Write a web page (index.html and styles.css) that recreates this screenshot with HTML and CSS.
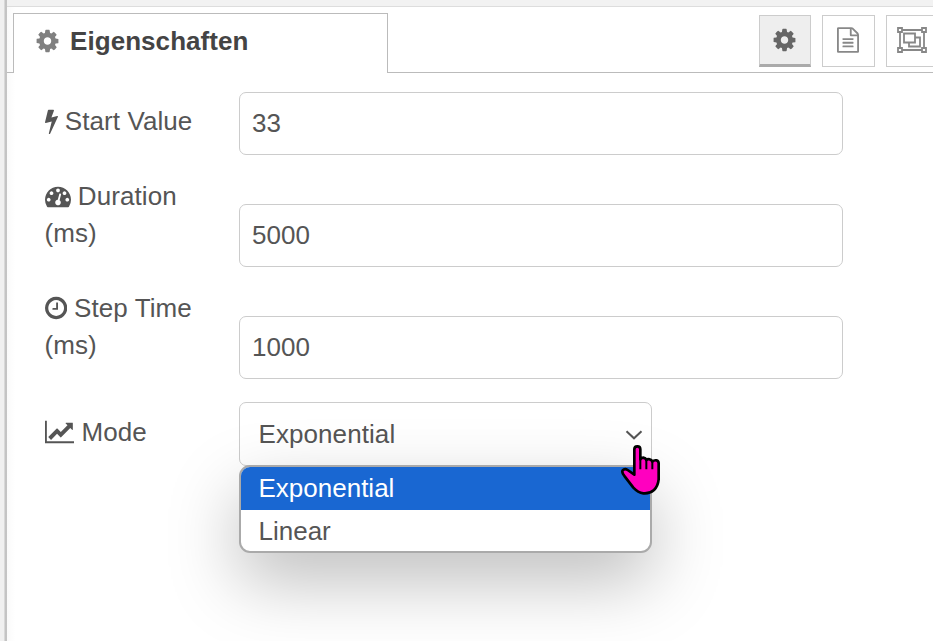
FILE: index.html
```html
<!DOCTYPE html>
<html lang="de">
<head>
<meta charset="utf-8">
<title>Eigenschaften</title>
<link rel="stylesheet" href="styles.css">
</head>
<body>
<svg class="defs" aria-hidden="true">
  <symbol id="cog" viewBox="0 0 1536 1792"><path d="M1024 896q0-106-75-181t-181-75-181 75-75 181 75 181 181 75 181-75 75-181zm512-109v222q0 12-8 23t-20 13l-185 28q-19 54-39 91 35 50 107 138 10 12 10 25t-9 23q-27 37-99 108t-94 71q-12 0-26-9l-138-108q-44 23-91 38-16 136-29 186-7 28-36 28h-222q-14 0-24.500-8.500t-11.500-21.500l-28-184q-49-16-90-37l-141 107q-10 9-25 9-14 0-25-11-126-114-165-168-7-10-7-23 0-12 8-23 15-21 51-66.500t54-70.500q-27-50-41-99l-183-27q-13-2-21-12.500t-8-23.500v-222q0-12 8-23t19-13l186-28q14-46 39-92-40-57-107-138-10-12-10-24 0-10 9-23 26-36 98.500-107.500t94.500-71.500q13 0 26 10l138 107q44-23 91-38 16-136 29-186 7-28 36-28h222q14 0 24.500 8.500t11.500 21.500l28 184q49 16 90 37l142-107q9-9 24-9 13 0 25 10 129 119 165 170 7 8 7 22 0 12-8 23-15 21-51 66.500t-54 70.500q26 50 41 98l183 28q13 2 21 12.500t8 23.500z"/></symbol>
</svg>
<div class="app">
  <div class="gutter"></div>
  <main class="panel">
    <div class="toolbar-edge"></div>
    <header class="tabs">
      <div class="tab-lead"></div>
      <div class="tab">
        <svg class="tab-icon" viewBox="0 0 1536 1792"><use href="#cog"/></svg>
        <span>Eigenschaften</span>
      </div>
      <div class="tools">
        <button class="tool active"><svg class="i-cog" viewBox="0 0 1536 1792"><use href="#cog"/></svg></button>
        <button class="tool"><svg class="i-file" viewBox="0 0 1536 1792"><path d="M1468 380q28 28 48 76t20 88v1152q0 40-28 68t-68 28h-1344q-40 0-68-28t-28-68v-1600q0-40 28-68t68-28h896q40 0 88 20t76 48zm-444-244v376h376q-10-29-22-41l-313-313q-12-12-41-22zm384 1528v-1024h-416q-40 0-68-28t-28-68v-416h-768v1536h1280zm-1024-864q0-14 9-23t23-9h704q14 0 23 9t9 23v64q0 14-9 23t-23 9h-704q-14 0-23-9t-9-23v-64zm736 224q14 0 23 9t9 23v64q0 14-9 23t-23 9h-704q-14 0-23-9t-9-23v-64q0-14 9-23t23-9h704zm0 256q14 0 23 9t9 23v64q0 14-9 23t-23 9h-704q-14 0-23-9t-9-23v-64q0-14 9-23t23-9h704z"/></svg></button>
        <button class="tool"><svg class="i-group" viewBox="0 0 30 26"><path d="M5 3h20M5 23h20M3 5v16M27 5v16M1 1h4v4H1zM25 1h4v4h-4zM1 21h4v4H1zM25 21h4v4h-4zM7 6.500h11v9H7zM18 10.500h5v9H12v-4"/></svg></button>
      </div>
    </header>
    <form class="form">
      <div class="row">
        <label class="label"><svg class="fa bolt" viewBox="0 0 896 1792"><path d="M885 566q18 20 7 44l-540 1157q-13 25-42 25-4 0-14-2-17-5-25.500-19t-4.500-30l197-808-406 101q-4 1-12 1-18 0-31-11-18-15-13-39l201-825q4-14 16-23t28-9h328q19 0 32 12.500t13 29.500q0 8-5 18l-171 463 396-98q8-2 12-2 19 0 34 15z"/></svg> Start Value</label>
        <div class="field">33</div>
      </div>
      <div class="row wrapped">
        <label class="label"><svg class="fa gauge" viewBox="0 0 1792 1792"><path d="M384 1152q0-53-37.500-90.500t-90.500-37.500-90.500 37.500-37.500 90.500 37.500 90.500 90.500 37.500 90.500-37.500 37.500-90.500zm192-448q0-53-37.500-90.500t-90.500-37.500-90.500 37.500-37.500 90.500 37.500 90.500 90.500 37.500 90.500-37.500 37.500-90.500zm428 481l101-382q6-26-7.500-48.500t-38.500-29.500-48 6.500-30 39.500l-101 382q-60 5-107 43.500t-63 98.500q-20 77 20 146t117 89 146-20 89-117q16-60-6-117t-72-91zm660-33q0-53-37.500-90.500t-90.500-37.500-90.500 37.500-37.500 90.500 37.500 90.500 90.500 37.500 90.500-37.500 37.500-90.500zm-640-640q0-53-37.500-90.500t-90.500-37.500-90.500 37.500-37.500 90.500 37.500 90.500 90.500 37.500 90.500-37.500 37.500-90.500zm448 192q0-53-37.500-90.500t-90.500-37.500-90.500 37.500-37.500 90.500 37.500 90.500 90.500 37.500 90.500-37.500 37.500-90.500zm320 448q0 261-141 483-19 29-54 29h-1402q-35 0-54-29-141-221-141-483 0-182 71-348t191-286 286-191 348-71 348 71 286 191 191 286 71 348z"/></svg> Duration<br>(ms)</label>
        <div class="field">5000</div>
      </div>
      <div class="row wrapped">
        <label class="label"><svg class="fa clock" viewBox="0 0 1536 1792"><path d="M896 544v448q0 14-9 23t-23 9h-320q-14 0-23-9t-9-23v-64q0-14 9-23t23-9h224v-352q0-14 9-23t23-9h64q14 0 23 9t9 23zm416 352q0-148-73-273t-198-198-273-73-273 73-198 198-73 273 73 273 198 198 273 73 273-73 198-198 73-273zm224 0q0 209-103 385.500t-279.500 279.500-385.500 103-385.500-103-279.500-279.500-103-385.500 103-385.500 279.500-279.500 385.500-103 385.500 103 279.500 279.500 103 385.500z"/></svg> Step Time<br>(ms)</label>
        <div class="field">1000</div>
      </div>
      <div class="row mode">
        <label class="label"><svg class="fa chart" viewBox="0 0 2048 1792"><path d="M2048 1536v128h-2048v-1536h128v1408h1920zm-128-1248v435q0 21-19.500 29.500t-35.500-7.500l-121-121-633 633q-10 10-23 10t-23-10l-233-233-416 416-192-192 585-585q10-10 23-10t23 10l233 233 464-464-121-121q-16-16-7.500-35.500t29.500-19.500h435q14 0 23 9t9 23z"/></svg> Mode</label>
        <div class="select">
          <span>Exponential</span>
          <svg class="chevron" viewBox="0 0 18 10"><path d="M1.500 1.200 9 8.300l7.500-7.100"/></svg>
          <div class="menu">
            <div class="option selected">Exponential</div>
            <div class="option">Linear</div>
          </div>
          <svg class="pointer" viewBox="120 162 126 156">
            <path class="hand" d="M163 178Q163 169 172 169Q181 169 181 178V208Q184 203 190 203Q197 204 199 210Q203 206 209 208Q215 209 217 215Q222 210 229 211Q236 213 236 220V268Q234 288 222 300Q208 312 190 310Q174 308 160 293L134 259Q124 248 128 241Q134 234 143 240L163 254Z"/>
            <path class="fingers" d="M181 206V238M199 210V238M217 214V238"/>
          </svg>
        </div>
      </div>
    </form>
  </main>
</div>
</body>
</html>
```
FILE: styles.css
```css
* { box-sizing: border-box; }
body {
  margin: 0;
  background: #fff;
  color: #555;
  font: 26px/37px "Liberation Sans", Arial, sans-serif;
}
.defs { display: none; }
svg { fill: currentColor; }
.app { display: flex; width: 933px; height: 641px; overflow: hidden; }
.gutter {
  flex: none;
  width: 7px;
  background: #f0f0f0;
  border-right: 2px solid #c4c4c4;
  box-shadow: inset -1px 0 #d8d8d8;
}
.panel {
  flex: 1;
  min-width: 0;
  background: linear-gradient(to right, #fafafa 0, #fff 8px);
}
.toolbar-edge { height: 7px; background: #f2f2f2; border-bottom: 1px solid #ddd; }
.tabs { display: flex; height: 66px; }
.tab-lead { width: 6px; border-bottom: 1px solid #bbb; }
.tab {
  display: flex;
  align-items: center;
  width: 375px;
  margin-top: 6px;
  padding: 0 0 4px 22px;
  border: 1px solid #bbb;
  border-bottom: 0;
  background: #fff;
  color: #444;
  font-weight: bold;
  letter-spacing: .06px;
}
.tab-icon { width: 23px; height: 26px; margin: 0 11px 2px 0; color: #808080; }
.tools {
  flex: 1;
  display: flex;
  justify-content: flex-start;
  gap: 11px;
  padding: 8px 0 0 371px;
  border-bottom: 1px solid #bbb;
  overflow: hidden;
}
.tool {
  flex: none;
  display: flex;
  align-items: center;
  justify-content: center;
  width: 53px;
  height: 52px;
  padding: 0;
  border: 1px solid #ccc;
  background: #fff;
  color: #888;
}
.tool.active {
  width: 52px;
  padding-right: 2px;
  border-bottom: 3px solid #aaa;
  background: #eee;
  color: #666;
}
.i-cog { width: 23px; height: 26px; }
.i-file { width: 22px; height: 26px; margin: 0 1px 2px 0; }
.i-group { width: 30px; height: 26px; margin: 0 2px 2px 0; fill: none; stroke: currentColor; stroke-width: 1.8; }
.form { display: flex; flex-direction: column; gap: 23px; padding: 19px 0 0 37px; }
.row { display: flex; align-items: flex-start; }
.label { width: 195px; padding: 11px 0 0 .5px; white-space: nowrap; letter-spacing: .08px; }
.mode .label { padding-top: 12px; }
.wrapped .label { height: 74px; padding-top: 0; }
.wrapped .field { margin-top: 26px; }
.fa { height: 26px; vertical-align: -4px; }
.bolt { width: 13px; }
.gauge { width: 26px; }
.clock { width: 22.300px; }
.chart { width: 29.700px; }
.field {
  width: 604px;
  height: 63px;
  padding: 12px;
  border: 1px solid #ccc;
  border-radius: 7px;
  background: #fff;
}
.select {
  position: relative;
  display: flex;
  align-items: center;
  justify-content: space-between;
  width: 413px;
  height: 64px;
  padding: 0 8px 0 18.500px;
  border: 1px solid #ccc;
  border-radius: 7px;
  letter-spacing: .08px;
}
.chevron { width: 18px; height: 10px; margin-top: 1px; fill: none; stroke: #555; stroke-width: 2; }
.menu {
  position: absolute;
  top: 62px;
  left: -1px;
  width: 413px;
  height: 88px;
  border: 2px solid #aaa;
  border-radius: 11px;
  overflow: hidden;
  background: #fff;
  box-shadow: 0 28px 70px rgba(0, 0, 0, .26);
}
.option { height: 42px; padding: 3px 17.500px; letter-spacing: 0; }
.option.selected { height: 43px; background: #1967d2; color: #fff; }
.pointer { position: absolute; left: 380px; top: 41px; width: 42px; height: 52px; }
.hand { fill: #ff00bf; stroke: #000; stroke-width: 8; stroke-linejoin: round; }
.fingers { fill: none; stroke: #000; stroke-width: 6; }
```
